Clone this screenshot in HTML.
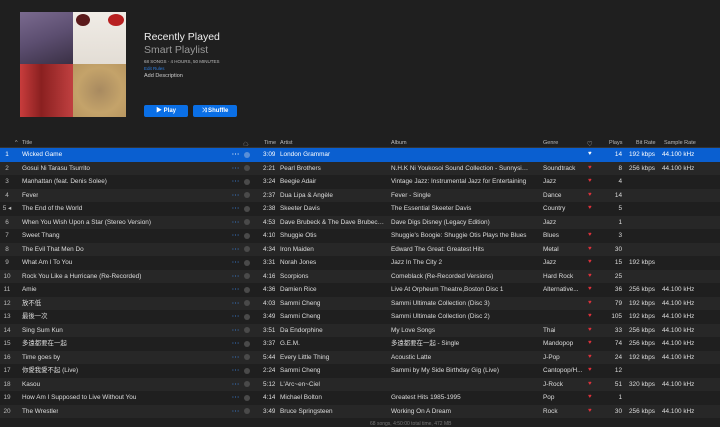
<!DOCTYPE html><html><head><meta charset="utf-8"><style>
*{margin:0;padding:0;box-sizing:border-box}
body{width:720px;height:426px;background:#1f1f1f;font-family:"Liberation Sans","Noto Sans CJK SC",sans-serif;color:#ddd;overflow:hidden;position:relative;font-size:6.4px}
.a{position:absolute;white-space:nowrap}
.r{position:absolute;left:0;width:720px;height:13.5px}
.r span{position:absolute;top:0;height:13.5px;line-height:13.5px;white-space:nowrap;overflow:hidden;text-overflow:ellipsis}
.n{left:0;width:14px;text-align:center;color:#bbb}
.t{left:22px}.d{left:232px;color:#3b7fd6;font-weight:bold;letter-spacing:0.5px}
.r span.c{left:244px;width:6px;height:6px;border-radius:50%;background:#4a4a4a;top:3.8px}
.tm{left:263px}.ar{left:280px;width:105px}.al{left:391px;width:140px}.g{left:543px;width:42px}
.h{left:588px;color:#e0323c;font-size:6px}.p{left:598px;width:24px;text-align:right}.b{left:629px}.s{left:662px}
.hd span{position:absolute;top:140px;font-size:5.5px;color:#bbb}
</style></head><body>
<div class="a" style="left:20px;top:12px;width:53px;height:52px;background:linear-gradient(160deg,#7a6a8f,#5c4e70 50%,#3a3045)"></div>
<div class="a" style="left:73px;top:12px;width:53px;height:52px;background:linear-gradient(180deg,#f0ece6,#e3ddd5);"><div class="a" style="left:3px;top:2px;width:14px;height:12px;border-radius:50%;background:#5a1a1a"></div><div class="a" style="left:35px;top:2px;width:16px;height:12px;border-radius:50%;background:#b82020"></div></div>
<div class="a" style="left:20px;top:64px;width:53px;height:53px;background:linear-gradient(90deg,#c83c3c,#8a2020 40%,#c04040)"></div>
<div class="a" style="left:73px;top:64px;width:53px;height:53px;background:radial-gradient(circle at 50% 50%,#a88a60,#c4a36a 60%,#b89660)"></div>
<div class="a" style="left:144px;top:31px;font-size:10.5px;color:#eee">Recently Played</div>
<div class="a" style="left:144px;top:44px;font-size:10.5px;color:#999">Smart Playlist</div>
<div class="a" style="left:144px;top:59px;font-size:4.5px;color:#bbb">68 SONGS · 4 HOURS, 50 MINUTES</div>
<div class="a" style="left:144px;top:66px;font-size:4.5px;color:#2d7ee0">Edit Rules</div>
<div class="a" style="left:144px;top:73px;font-size:5.5px;color:#ccc">Add Description</div>
<div class="a" style="left:144px;top:105px;width:44px;height:12px;background:#0a6fe6;border-radius:2px;color:#fff;font-size:6px;text-align:center;line-height:12px;font-weight:bold">▶ Play</div>
<div class="a" style="left:193px;top:105px;width:44px;height:12px;background:#0a6fe6;border-radius:2px;color:#fff;font-size:6px;text-align:center;line-height:12px;font-weight:bold">⤨ Shuffle</div>
<div class="hd"><span style="left:15px">^</span><span style="left:22px">Title</span><span style="left:243px">☁</span><span style="left:264px">Time</span><span style="left:280px">Artist</span><span style="left:391px">Album</span><span style="left:543px">Genre</span><span style="left:587px">♡</span><span style="left:609px">Plays</span><span style="left:636px">Bit Rate</span><span style="left:664px">Sample Rate</span></div>
<div class="a" style="left:0;top:138px;width:720px;height:10px;border-bottom:1px solid #333"></div>
<div id="rows" style="position:absolute;left:0;top:148px;width:720px">
<div class="r" style="top:0;background:#0a5fd0;color:#fff"><span class="n" style="color:#fff">1</span><span class="t">Wicked Game</span><span class="d" style="color:#fff">···</span><span class="c" style="background:#5a8fd8"></span><span class="tm">3:09</span><span class="ar">London Grammar</span><span class="al"></span><span class="h" style="color:#fff">♥</span><span class="p">14</span><span class="b">192 kbps</span><span class="s">44.100 kHz</span></div>
<div class="r" style="top:13.5px;background:#272727"><span class="n">2</span><span class="t">Gosui Ni Tarasu Tsurrito</span><span class="d">···</span><span class="c"></span><span class="tm">2:21</span><span class="ar">Pearl Brothers</span><span class="al">N.H.K Ni Youkosoi Sound Collection - Sunnyside Ni...</span><span class="g">Soundtrack</span><span class="h">♥</span><span class="p">8</span><span class="b">256 kbps</span><span class="s">44.100 kHz</span></div>
<div class="r" style="top:27px"><span class="n">3</span><span class="t">Manhattan (feat. Denis Solee)</span><span class="d">···</span><span class="c"></span><span class="tm">3:24</span><span class="ar">Beegie Adair</span><span class="al">Vintage Jazz: Instrumental Jazz for Entertaining</span><span class="g">Jazz</span><span class="h">♥</span><span class="p">4</span></div>
<div class="r" style="top:40.5px;background:#272727"><span class="n">4</span><span class="t">Fever</span><span class="d">···</span><span class="c"></span><span class="tm">2:37</span><span class="ar">Dua Lipa &amp; Angèle</span><span class="al">Fever - Single</span><span class="g">Dance</span><span class="h">♥</span><span class="p">14</span></div>
<div class="r" style="top:54px"><span class="n">5 ◂</span><span class="t">The End of the World</span><span class="d">···</span><span class="c"></span><span class="tm">2:38</span><span class="ar">Skeeter Davis</span><span class="al">The Essential Skeeter Davis</span><span class="g">Country</span><span class="h">♥</span><span class="p">5</span></div>
<div class="r" style="top:67.5px;background:#272727"><span class="n">6</span><span class="t">When You Wish Upon a Star (Stereo Version)</span><span class="d">···</span><span class="c"></span><span class="tm">4:53</span><span class="ar">Dave Brubeck &amp; The Dave Brubeck Q...</span><span class="al">Dave Digs Disney (Legacy Edition)</span><span class="g">Jazz</span><span class="p">1</span></div>
<div class="r" style="top:81px"><span class="n">7</span><span class="t">Sweet Thang</span><span class="d">···</span><span class="c"></span><span class="tm">4:10</span><span class="ar">Shuggie Otis</span><span class="al">Shuggie's Boogie: Shuggie Otis Plays the Blues</span><span class="g">Blues</span><span class="h">♥</span><span class="p">3</span></div>
<div class="r" style="top:94.5px;background:#272727"><span class="n">8</span><span class="t">The Evil That Men Do</span><span class="d">···</span><span class="c"></span><span class="tm">4:34</span><span class="ar">Iron Maiden</span><span class="al">Edward The Great: Greatest Hits</span><span class="g">Metal</span><span class="h">♥</span><span class="p">30</span></div>
<div class="r" style="top:108px"><span class="n">9</span><span class="t">What Am I To You</span><span class="d">···</span><span class="c"></span><span class="tm">3:31</span><span class="ar">Norah Jones</span><span class="al">Jazz In The City 2</span><span class="g">Jazz</span><span class="h">♥</span><span class="p">15</span><span class="b">192 kbps</span></div>
<div class="r" style="top:121.5px;background:#272727"><span class="n">10</span><span class="t">Rock You Like a Hurricane (Re-Recorded)</span><span class="d">···</span><span class="c"></span><span class="tm">4:16</span><span class="ar">Scorpions</span><span class="al">Comeblack (Re-Recorded Versions)</span><span class="g">Hard Rock</span><span class="h">♥</span><span class="p">25</span></div>
<div class="r" style="top:135px"><span class="n">11</span><span class="t">Amie</span><span class="d">···</span><span class="c"></span><span class="tm">4:36</span><span class="ar">Damien Rice</span><span class="al">Live At Orpheum Theatre,Boston Disc 1</span><span class="g">Alternative...</span><span class="h">♥</span><span class="p">36</span><span class="b">256 kbps</span><span class="s">44.100 kHz</span></div>
<div class="r" style="top:148.5px;background:#272727"><span class="n">12</span><span class="t">放不低</span><span class="d">···</span><span class="c"></span><span class="tm">4:03</span><span class="ar">Sammi Cheng</span><span class="al">Sammi Ultimate Collection (Disc 3)</span><span class="h">♥</span><span class="p">79</span><span class="b">192 kbps</span><span class="s">44.100 kHz</span></div>
<div class="r" style="top:162px"><span class="n">13</span><span class="t">最後一次</span><span class="d">···</span><span class="c"></span><span class="tm">3:49</span><span class="ar">Sammi Cheng</span><span class="al">Sammi Ultimate Collection (Disc 2)</span><span class="h">♥</span><span class="p">105</span><span class="b">192 kbps</span><span class="s">44.100 kHz</span></div>
<div class="r" style="top:175.5px;background:#272727"><span class="n">14</span><span class="t">Sing Sum Kun</span><span class="d">···</span><span class="c"></span><span class="tm">3:51</span><span class="ar">Da Endorphine</span><span class="al">My Love Songs</span><span class="g">Thai</span><span class="h">♥</span><span class="p">33</span><span class="b">256 kbps</span><span class="s">44.100 kHz</span></div>
<div class="r" style="top:189px"><span class="n">15</span><span class="t">多遠都要在一起</span><span class="d">···</span><span class="c"></span><span class="tm">3:37</span><span class="ar">G.E.M.</span><span class="al">多遠都要在一起 - Single</span><span class="g">Mandopop</span><span class="h">♥</span><span class="p">74</span><span class="b">256 kbps</span><span class="s">44.100 kHz</span></div>
<div class="r" style="top:202.5px;background:#272727"><span class="n">16</span><span class="t">Time goes by</span><span class="d">···</span><span class="c"></span><span class="tm">5:44</span><span class="ar">Every Little Thing</span><span class="al">Acoustic Latte</span><span class="g">J-Pop</span><span class="h">♥</span><span class="p">24</span><span class="b">192 kbps</span><span class="s">44.100 kHz</span></div>
<div class="r" style="top:216px"><span class="n">17</span><span class="t">你愛我愛不起 (Live)</span><span class="d">···</span><span class="c"></span><span class="tm">2:24</span><span class="ar">Sammi Cheng</span><span class="al">Sammi by My Side Birthday Gig (Live)</span><span class="g">Cantopop/H...</span><span class="h">♥</span><span class="p">12</span></div>
<div class="r" style="top:229.5px;background:#272727"><span class="n">18</span><span class="t">Kasou</span><span class="d">···</span><span class="c"></span><span class="tm">5:12</span><span class="ar">L'Arc~en~Ciel</span><span class="al"></span><span class="g">J-Rock</span><span class="h">♥</span><span class="p">51</span><span class="b">320 kbps</span><span class="s">44.100 kHz</span></div>
<div class="r" style="top:243px"><span class="n">19</span><span class="t">How Am I Supposed to Live Without You</span><span class="d">···</span><span class="c"></span><span class="tm">4:14</span><span class="ar">Michael Bolton</span><span class="al">Greatest Hits 1985-1995</span><span class="g">Pop</span><span class="h">♥</span><span class="p">1</span></div>
<div class="r" style="top:256.5px;background:#272727"><span class="n">20</span><span class="t">The Wrestler</span><span class="d">···</span><span class="c"></span><span class="tm">3:49</span><span class="ar">Bruce Springsteen</span><span class="al">Working On A Dream</span><span class="g">Rock</span><span class="h">♥</span><span class="p">30</span><span class="b">256 kbps</span><span class="s">44.100 kHz</span></div>
</div>
<div class="a" style="left:370px;top:421px;font-size:5px;color:#777">68 songs, 4:50:00 total time, 472 MB</div>
</body></html>
